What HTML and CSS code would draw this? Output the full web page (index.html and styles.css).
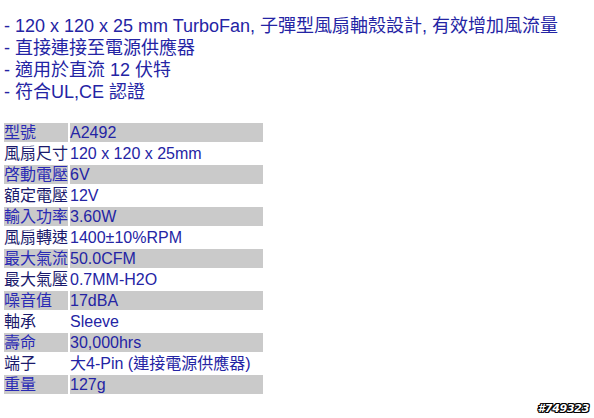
FILE: index.html
```html
<!DOCTYPE html>
<html lang="zh-Hant">
<head>
<meta charset="utf-8">
<title>TurboFan</title>
<link rel="stylesheet" href="styles.css">
</head>
<body>
<div class="page">
  <div class="intro">
    <div class="line">- 120 x 120 x 25 mm TurboFan, 子彈型風扇軸殼設計, 有效增加風流量</div>
    <div class="line">- 直接連接至電源供應器</div>
    <div class="line">- 適用於直流 12 伏特</div>
    <div class="line">- 符合UL,CE 認證</div>
  </div>
  <table class="spec">
    <tr class="g"><td class="k">型號</td><td class="v">A2492</td></tr>
    <tr class="w"><td class="k">風扇尺寸</td><td class="v">120 x 120 x 25mm</td></tr>
    <tr class="g"><td class="k">啓動電壓</td><td class="v">6V</td></tr>
    <tr class="w"><td class="k">額定電壓</td><td class="v">12V</td></tr>
    <tr class="g"><td class="k">輸入功率</td><td class="v">3.60W</td></tr>
    <tr class="w"><td class="k">風扇轉速</td><td class="v">1400±10%RPM</td></tr>
    <tr class="g"><td class="k">最大氣流</td><td class="v">50.0CFM</td></tr>
    <tr class="w"><td class="k">最大氣壓</td><td class="v">0.7MM-H2O</td></tr>
    <tr class="g"><td class="k">噪音值</td><td class="v">17dBA</td></tr>
    <tr class="w"><td class="k">軸承</td><td class="v">Sleeve</td></tr>
    <tr class="g"><td class="k">壽命</td><td class="v">30,000hrs</td></tr>
    <tr class="w"><td class="k">端子</td><td class="v">大4-Pin (連接電源供應器)</td></tr>
    <tr class="g"><td class="k">重量</td><td class="v">127g</td></tr>
  </table>
  <div class="mark">#749323</div>
</div>
</body>
</html>
```
FILE: styles.css
```css
html, body {
  margin: 0;
  padding: 0;
  background: #ffffff;
}
.page {
  position: relative;
  width: 594px;
  height: 418px;
  font-family: "Liberation Sans", "Noto Sans CJK TC", sans-serif;
  color: #2424a4;
}
.intro {
  padding: 15px 0 0 4px;
  font-size: 18px;
  line-height: 22px;
}
.spec {
  margin: 18px 0 0 2px;
  border-collapse: separate;
  border-spacing: 2px;
  font-size: 16px;
}
.spec td {
  height: 19px;
  padding: 0;
  line-height: 19px;
  white-space: nowrap;
  vertical-align: middle;
}
.spec .k { width: 63px; }
.spec .v { width: 193px; }
.spec .g td { background: #cacaca; }
.spec .g .k { color: #2a2ab4; }
.spec .w .k { color: #1a1a6c; }
.spec .v { color: #2424a4; }
.mark {
  position: absolute;
  right: 5px;
  bottom: 3px;
  font-family: "DejaVu Sans", sans-serif;
  font-size: 11px;
  font-weight: bold;
  font-style: italic;
  color: #ffffff;
  letter-spacing: -0.3px;
  text-shadow: 1px 0 0 #000, -1px 0 0 #000, 0 1px 0 #000, 0 -1px 0 #000, 1px 1px 0 #000, -1px -1px 0 #000, 1px -1px 0 #000, -1px 1px 0 #000;
}
```
